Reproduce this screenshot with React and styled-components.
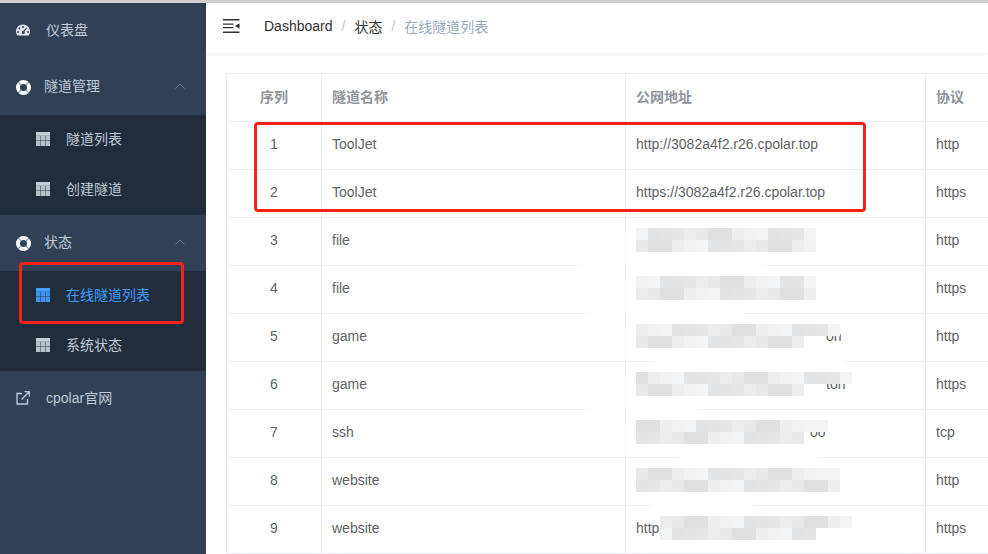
import styled, { createGlobalStyle } from "styled-components";

const GlobalStyle = createGlobalStyle`
  html, body {
    margin: 0;
    padding: 0;
    height: 100%;
    overflow: hidden;
    background: #fff;
    font-family: "Liberation Sans", "Noto Sans CJK SC", sans-serif;
    font-size: 14px;
  }
`;

const Page = styled.div`
  position: relative;
  width: 988px;
  height: 554px;
  overflow: hidden;
  border-top: 3px solid #cfcfcf;
  box-sizing: border-box;
  display: flex;
`;

const Sidebar = styled.aside`
  width: 206px;
  flex-shrink: 0;
  background: #304156;
  color: #bfcbd9;
`;

const MenuItem = styled.div`
  height: 56px;
  box-sizing: border-box;
  display: flex;
  align-items: center;
  padding-left: 16px;
  padding-right: 21px;
  padding-bottom: 4px;
  gap: ${(p) => p.$gap || 16}px;
`;

const MenuLabel = styled.span`
  flex: 1;
`;

const SubMenu = styled.div`
  background: #1f2d3d;
`;

const SubItem = styled.div`
  height: 50px;
  box-sizing: border-box;
  display: flex;
  align-items: center;
  padding-left: 36px;
  padding-bottom: 4px;
  gap: 16px;
  color: ${(p) => (p.$active ? "#409eff" : "#bfcbd9")};
`;

const Main = styled.main`
  flex: 1;
  min-width: 0;
`;

const Navbar = styled.header`
  height: 50px;
  box-sizing: border-box;
  display: flex;
  align-items: center;
  padding-left: 17px;
  padding-bottom: 4px;
  box-shadow: 0 1px 4px rgba(0, 21, 41, 0.08);
`;

const Crumbs = styled.nav`
  margin-left: 24px;
  display: flex;
  align-items: center;
  color: #303133;
`;

const Sep = styled.span`
  margin: 0 9px;
  color: #c0c4cc;
`;

const Current = styled.span`
  color: #97a8be;
`;

const Content = styled.div`
  padding: 20px 0 0 20px;
`;

const Table = styled.div`
  width: 790px;
  border-top: 1px solid #ebeef5;
  border-left: 1px solid #ebeef5;
  color: #606266;
`;

const Row = styled.div`
  display: grid;
  grid-template-columns: 95px 304px 300px 1fr;
  height: 48px;
  box-sizing: border-box;
  border-bottom: 1px solid #ebeef5;
  font-weight: ${(p) => (p.$head ? 700 : 400)};
  color: ${(p) => (p.$head ? "#909399" : "#606266")};
`;

const Cell = styled.div`
  position: relative;
  display: flex;
  align-items: center;
  justify-content: ${(p) => (p.$center ? "center" : "flex-start")};
  padding-left: ${(p) => (p.$center ? 0 : 10)}px;
  padding-bottom: 4px;
  border-right: 1px solid #ebeef5;
  white-space: nowrap;
`;

// the smeared-out table lines left behind by the redaction
const LineEraser = styled.div`
  position: absolute;
  left: ${(p) => p.$from}px;
  bottom: -1px;
  width: ${(p) => p.$width}px;
  height: 1px;
  background: rgba(255, 255, 255, 0.85);
`;

const ColumnEraser = styled.div`
  position: absolute;
  left: -1px;
  top: 12px;
  width: 1px;
  height: 36px;
  background: rgba(255, 255, 255, 0.75);
`;

const Tail = styled.span`
  position: absolute;
  left: ${(p) => p.$left}px;
  top: 14px;
  line-height: 16px;
`;

const Mosaic = styled.div`
  position: absolute;
  left: ${(p) => p.$left}px;
  top: 10px;
  display: grid;
  grid-template-columns: repeat(${(p) => p.$cols}, 12px);
  grid-auto-rows: 12px;
`;

const Pixel = styled.i`
  display: block;
  background: ${(p) => p.$c};
`;

const Marker = styled.div`
  position: absolute;
  box-sizing: border-box;
  border: 3px solid #f5221b;
  border-radius: 4px;
  left: ${(p) => p.$x}px;
  top: ${(p) => p.$y}px;
  width: ${(p) => p.$w}px;
  height: ${(p) => p.$h}px;
`;

const Icon = styled.svg`
  flex-shrink: 0;
  margin-top: ${(p) => p.$drop || 2}px;
`;

const GaugeIcon = () => (
  <Icon width="14" height="12" viewBox="0 0 14 12">
    <path fill="#dfe5ec" fillRule="evenodd" d="M7 .5C3.1 .5 0 3.6 0 7.5c0 1.4.4 2.7 1.1 3.7.2.2.4.3.6.3h10.600c.2 0 .4-.1.6-.3.7-1 1.100-2.300 1.100-3.700 0-3.900-3.100-7-7-7zM7 2a1 1 0 1 1 0 2 1 1 0 0 1 0-2zM3.4 3.6a1 1 0 1 1 0 2 1 1 0 0 1 0-2zM2 7a1 1 0 1 1 0 2 1 1 0 0 1 0-2zM12 7a1 1 0 1 1 0 2 1 1 0 0 1 0-2zM10.4 3.4l.7.6-2.6 3.6c.2.3.3.6.3.9 0 .9-.6 1.500-1.500 1.500S5.800 9 5.800 8.200 6.500 6.800 7.400 6.800z" />
  </Icon>
);

const RingIcon = () => (
  <Icon $drop={4} width="15" height="15" viewBox="0 0 15 15">
    <circle cx="7.5" cy="7.5" r="5.5" fill="none" stroke="#fff" strokeWidth="4" />
    <path stroke="#7f9ab8" strokeWidth="1.2" d="M2.2 2.2L5 5M12.8 2.2L10 5M2.2 12.8L5 10M12.8 12.800L10 10" />
  </Icon>
);

const TableIcon = ({ color }) => (
  <Icon width="14" height="14" viewBox="0 0 14 14">
    <rect width="14" height="14" fill={color} />
    <rect y="4" width="14" height="10" fill="#1f2d3d" opacity="0.08" />
    <path stroke="#1f2d3d" strokeOpacity="0.45" strokeWidth="1" fill="none" d="M4.5 4v10M9.5 4v10M0 8.500h14" />
    <path stroke="#1f2d3d" strokeOpacity="0.2" strokeWidth="1" fill="none" d="M0 3.500h14" />
  </Icon>
);

const LinkIcon = () => (
  <Icon width="14" height="14" viewBox="0 0 14 14" fill="none" stroke="#bfcbd9" strokeWidth="1.3">
    <path d="M6 2.500H1v10.500h10.500V8" />
    <path d="M5.500 8.500L13 1M8.500 .7h4.800v4.800" />
  </Icon>
);

const Chevron = () => (
  <Icon width="10" height="6" viewBox="0 0 10 6" fill="none" stroke="#6d7d90" strokeWidth="1">
    <path d="M.5 5.500L5 1l4.500 4.500" />
  </Icon>
);

const Hamburger = () => (
  <Icon $drop={1} width="17" height="15" viewBox="0 0 17 15">
    <path fill="#303133" d="M0 0h16.500v1.500H0zM0 4.500h10.500v1.300H0zM0 8h10.500v1.300H0zM0 12.500h16.500V14H0zM12 7l4.500-2.800v5.600z" />
  </Icon>
);

const greys = ["#e6e6e6", "#e0e0e0", "#f2f2f2", "#e4e4e4", "#e8e8e8", "#eeeeee", "#e2e3e5", "#ececec", "#dfe0e1", "#f3f4f5"];

// top and bottom mosaic widths per redacted row, with where the table line got smeared
const redactions = {
  3: { top: 15, bottom: 15, line: [-49, 190] },
  4: { top: 15, bottom: 15, line: [-41, 160] },
  5: { top: 17, bottom: 14, line: [27, 192], tail: [200, "on"] },
  6: { top: 18, bottom: 14, line: [-41, 114], tail: [200, "ton"] },
  7: { top: 16, bottom: 14, line: [52, 141], tail: [184, "oo"] },
  8: { top: 17, bottom: 17, line: [24, 104] },
  9: { top: 16, bottom: 13, left: 34 },
};

const rows = [
  [1, "ToolJet", "http://3082a4f2.r26.cpolar.top", "http"],
  [2, "ToolJet", "https://3082a4f2.r26.cpolar.top", "https"],
  [3, "file", "", "http"],
  [4, "file", "", "https"],
  [5, "game", "", "http"],
  [6, "game", "", "https"],
  [7, "ssh", "", "tcp"],
  [8, "website", "", "http"],
  [9, "website", "http", "https"],
];

const Redaction = ({ n }) => {
  const r = redactions[n];
  if (!r) return null;
  return (
    <>
      {n < 8 && <ColumnEraser />}
      {r.line && <LineEraser $from={r.line[0]} $width={r.line[1]} />}
      {r.tail && <Tail $left={r.tail[0]}>{r.tail[1]}</Tail>}
      <Mosaic $cols={r.top} $left={r.left || 10}>
        {Array.from({ length: r.top + r.bottom }, (_, i) => (
          <Pixel key={i} $c={i === r.top - 1 ? "#f4f4f4" : greys[(i * 7 + n * 3) % greys.length]} />
        ))}
      </Mosaic>
    </>
  );
};

const App = () => {
  return (
    <Page>
      <GlobalStyle />
      <Sidebar>
        <MenuItem>
          <GaugeIcon />
          <MenuLabel>仪表盘</MenuLabel>
        </MenuItem>
        <MenuItem $gap={13}>
          <RingIcon />
          <MenuLabel>隧道管理</MenuLabel>
          <Chevron />
        </MenuItem>
        <SubMenu>
          <SubItem>
            <TableIcon color="#c5ced8" />
            隧道列表
          </SubItem>
          <SubItem>
            <TableIcon color="#c5ced8" />
            创建隧道
          </SubItem>
        </SubMenu>
        <MenuItem $gap={13}>
          <RingIcon />
          <MenuLabel>状态</MenuLabel>
          <Chevron />
        </MenuItem>
        <SubMenu>
          <SubItem $active>
            <TableIcon color="#409eff" />
            在线隧道列表
          </SubItem>
          <SubItem>
            <TableIcon color="#c5ced8" />
            系统状态
          </SubItem>
        </SubMenu>
        <MenuItem>
          <LinkIcon />
          <MenuLabel>cpolar官网</MenuLabel>
        </MenuItem>
      </Sidebar>
      <Main>
        <Navbar>
          <Hamburger />
          <Crumbs>
            Dashboard
            <Sep>/</Sep>
            状态
            <Sep>/</Sep>
            <Current>在线隧道列表</Current>
          </Crumbs>
        </Navbar>
        <Content>
          <Table>
            <Row $head>
              <Cell $center>序列</Cell>
              <Cell>隧道名称</Cell>
              <Cell>公网地址</Cell>
              <Cell>协议</Cell>
            </Row>
            {rows.map(([n, name, url, proto]) => (
              <Row key={n}>
                <Cell $center>{n}</Cell>
                <Cell>{name}</Cell>
                <Cell>
                  {url}
                  <Redaction n={n} />
                </Cell>
                <Cell>{proto}</Cell>
              </Row>
            ))}
          </Table>
        </Content>
      </Main>
      <Marker $x={254} $y={119} $w={612} $h={90} />
      <Marker $x={19} $y={259} $w={165} $h={62} />
    </Page>
  );
};

export default App;
